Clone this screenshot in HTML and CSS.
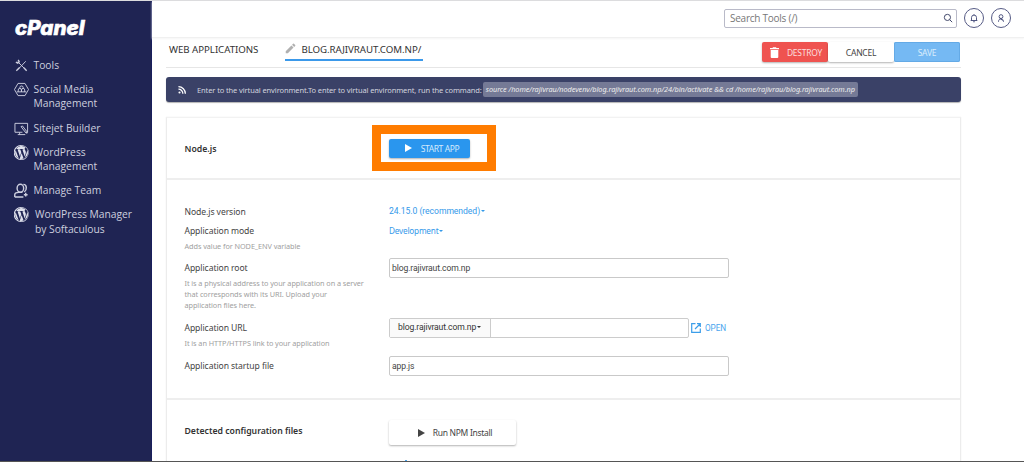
FILE: index.html
```html
<!DOCTYPE html>
<html lang="en">
<head>
<meta charset="utf-8">
<title>cPanel - Web Applications</title>
<link rel="stylesheet" href="styles.css">
</head>
<body>
<svg class="defs" width="0" height="0" aria-hidden="true">
  <symbol id="wordpress" viewBox="0 0 122.5 122.5"><path d="M8.7 61.3c0 20.8 12.1 38.7 29.6 47.3l-25-68.7c-3 6.5-4.6 13.7-4.6 21.4zm88-2.7c0-6.5-2.3-11-4.3-14.5-2.7-4.3-5.2-8-5.2-12.3 0-4.8 3.7-9.3 8.9-9.3h.7a52.4 52.4 0 0 0-79.4 9.9h3.4c5.5 0 13.9-.7 13.9-.7 2.9-.2 3.2 4 .4 4.3 0 0-2.9.3-6 .5l19.1 57 11.5-34.5-8.2-22.5c-2.8-.2-5.5-.5-5.5-.5-2.8-.2-2.5-4.5.3-4.3 0 0 8.7.7 13.9.7 5.5 0 13.9-.7 13.9-.7 2.9-.2 3.2 4 .4 4.3 0 0-2.9.3-6 .5l19 56.5 5.2-17.5c2.3-7.3 4-12.5 4-16.9zm-34.5 7.3-15.8 45.8a52.6 52.6 0 0 0 32.3-.8l-.4-.7zM107.4 36c.2 1.7.4 3.5.4 5.5 0 5.4-1 11.5-4.1 19.1l-16 46.4a52.5 52.5 0 0 0 19.7-71z"/><path d="M61.3 0a61.3 61.3 0 1 0 0 122.5 61.3 61.3 0 0 0 0-122.5zm0 116.7a55.4 55.4 0 1 1 0-110.9 55.4 55.4 0 0 1 0 110.9z"/></symbol>
</svg>
<div class="app">
  <aside class="sidebar">
    <svg class="logo" viewBox="0 0 90 24" role="img" aria-label="cPanel"><text x="1" y="16.2" textLength="69.5" lengthAdjust="spacingAndGlyphs">cPanel</text></svg>
    <nav class="nav">
      <a class="nav-item"><svg class="nav-icon" viewBox="0 0 16 16"><path class="line" d="M4 4l8.5 8.500M12.500 3.500 4 12.500"/><path class="line bold" d="M10.500 10.500l3 3M2.500 13.500l3.500-3.500M2 4.500l2 1 1.500-1.500-1-2"/></svg><span>Tools</span></a>
      <a class="nav-item"><svg class="nav-icon" viewBox="0 0 16 16"><path class="line" d="M4.300 1.500h7.400L15.500 8l-3.800 6.500H4.300L.5 8z"/><path class="line" d="M4.500 10.500V8.500a1.700 1.700 0 0 1 3.400 0v2M8 10.500v-2a1.700 1.700 0 0 1 3.400 0v2M3 10.500h10M6.200 7V6a1.800 1.800 0 0 1 3.600 0v1"/></svg><span>Social Media<br>Management</span></a>
      <a class="nav-item"><svg class="nav-icon" viewBox="0 0 16 16"><path class="line" d="M9 12H1V2.500h13.500V12H12M4 14.500h8M6 12v2.500"/><path class="line" d="M7.500 6l5 6.500 1.500.5-.3-1.700-4.700-6z"/></svg><span>Sitejet Builder</span></a>
      <a class="nav-item"><svg class="nav-icon fill"><use href="#wordpress"/></svg><span>WordPress<br>Management</span></a>
      <a class="nav-item"><svg class="nav-icon" viewBox="0 0 16 16"><ellipse class="line bold" cx="6.800" cy="5.500" rx="3.500" ry="4.200"/><path class="line bold" d="M10 1.500c4 0 4 6 1 8M.8 15v-2.500c0-2 2.500-2.500 4.200-2.500h4M.8 15H10M12.500 10.500v4M10.500 12.500h4"/></svg><span>Manage Team</span></a>
      <a class="nav-item shifted"><svg class="nav-icon fill"><use href="#wordpress"/></svg><span>WordPress Manager<br>by Softaculous</span></a>
    </nav>
  </aside>
  <div class="content">
    <header class="topbar">
      <label class="search"><span>Search Tools (/)</span><svg viewBox="0 0 12 12"><circle cx="5.300" cy="5.300" r="3.700"/><path d="M8 8l3 3"/></svg></label>
      <span class="round"><svg viewBox="0 0 12 12"><path d="M2 9h8M3 9V5.500a3 3 0 0 1 6 0V9M5 10.500h2M6 1.500v1"/></svg></span>
      <span class="round"><svg viewBox="0 0 12 12"><circle cx="6" cy="4.300" r="2.300"/><path d="M3 10.500c0-2.500 1.500-3.500 3-3.500s3 1 3 3.500M4.300 6l3.700 3"/></svg></span>
    </header>
    <main class="main">
      <div class="tabs">
        <a class="tab">WEB APPLICATIONS</a>
        <a class="tab active"><svg viewBox="0 0 12 12"><path d="M.8 9v2.300H3.100L9.300 5 7 2.700zM7.700 2l2.300 2.300 1.100-1.100a.7.7 0 0 0 0-1L9.800.9a.7.7 0 0 0-1 0z"/></svg>BLOG.RAJIVRAUT.COM.NP/</a>
        <div class="actions">
          <button class="btn destroy"><svg viewBox="0 0 9 11"><path d="M0 1h2.500L3 .2h3L6.500 1H9v1.200H0zM.7 3h7.600v7a1 1 0 0 1-1 1H1.700a1 1 0 0 1-1-1z"/></svg>DESTROY</button>
          <button class="btn cancel">CANCEL</button>
          <button class="btn save">SAVE</button>
        </div>
      </div>
      <div class="notice">
        <svg viewBox="0 0 9 9"><circle cx="1.700" cy="7.300" r="1.200"/><path d="M.5 3.600a5 5 0 0 1 5 5M.5.800a7.800 7.800 0 0 1 7.800 7.800"/></svg>
        <span>Enter to the virtual environment.To enter to virtual environment, run the command:</span>
        <code>source /home/rajivrau/nodevenv/blog.rajivraut.com.np/24/bin/activate &amp;&amp; cd /home/rajivrau/blog.rajivraut.com.np</code>
      </div>
      <div class="panel">
        <section class="section start">
          <h2>Node.js</h2>
          <div class="highlight"><button class="btn start-btn"><svg viewBox="0 0 7 8"><path d="M0 0l7 4-7 4z"/></svg>START APP</button></div>
        </section>
        <section class="section form">
          <div class="row version"><div class="label">Node.js version</div><a class="link">24.15.0 (recommended)<i class="caret"></i></a></div>
          <div class="row mode"><div class="label">Application mode<small>Adds value for NODE_ENV variable</small></div><a class="link dev">Development<i class="caret"></i></a></div>
          <div class="row root"><div class="label">Application root<small>It is a physical address to your application on a server<br>that corresponds with its URI. Upload your<br>application files here.</small></div><div class="input">blog.rajivraut.com.np</div></div>
          <div class="row url"><div class="label">Application URL<small>It is an HTTP/HTTPS link to your application</small></div>
            <div class="group"><span class="domain">blog.rajivraut.com.np<i class="caret"></i></span><span class="path"></span></div>
            <a class="open"><svg viewBox="0 0 10 10"><path d="M4.500.7H.7v8.600h8.600V5.500M6 .7h3.300V4M9 1 4 6"/></svg>OPEN</a></div>
          <div class="row startup"><div class="label">Application startup file</div><div class="input">app.js</div></div>
        </section>
        <section class="section detected">
          <h2>Detected configuration files</h2>
          <div class="detected-actions">
            <button class="btn npm"><svg viewBox="0 0 7 8"><path d="M0 0l7 4-7 4z"/></svg>Run NPM Install</button>
            <i class="tip"></i>
          </div>
        </section>
      </div>
    </main>
  </div>
</div>
</body>
</html>
```
FILE: styles.css
```css
* { box-sizing: border-box; }
body { margin: 0; background: #fff; font-family: "Noto Sans", sans-serif; color: #444; }
svg { display: block; flex: none; }
.defs { position: absolute; }
.app { display: flex; height: 462px; overflow: hidden; border-top: 1px solid #dcdcde; border-bottom: 1px solid #555; }
.sidebar { width: 152px; flex: none; background: #1f2453; border-right: 1px solid #191e5c; padding: 18px 0 0 14px; }
.logo { width: 90px; height: 24px; fill: #fff; overflow: visible; }
.logo text { font: italic 800 19.5px "Inter", sans-serif; stroke: #fff; stroke-width: .6px; }
.nav { margin-top: 15px; display: flex; flex-direction: column; gap: 10px; font: 10.300px/14.200px "Open Sans", sans-serif; color: #cdcfdf; }
.nav-item { display: flex; gap: 4.500px; white-space: nowrap; letter-spacing: 0; }
.nav-item.shifted { gap: 6px; letter-spacing: -.03px; }
.nav-icon { width: 15px; height: 15px; margin-bottom: -2px; fill: none; stroke: #cdcfdf; }
.nav-icon.fill { fill: #dfe1ec; stroke: none; }
.nav-icon .line { stroke-width: 1; }
.nav-icon .bold { stroke-width: 1.500; }

.content { flex: 1; min-width: 0; }
.topbar { height: 37px; border-bottom: 1px solid #f0f0f0; box-shadow: 0 1px 2px #f5f5f5; display: flex; align-items: center; justify-content: flex-end; gap: 7px; padding: 0 13px 2px 0; }
.search { width: 233px; height: 19px; border: 1px solid #b9bac8; border-radius: 2px; display: flex; align-items: center; justify-content: space-between; padding: 0 3px 0 5px; font: 10px "Open Sans", sans-serif; letter-spacing: -.25px; color: #777; }
.search svg { width: 10px; height: 10px; fill: none; stroke: #444a6c; stroke-width: 1.200; }
.round { width: 20px; height: 20px; border: 1px solid #565b85; border-radius: 50%; display: grid; place-items: center; }
.round svg { width: 10px; height: 10px; fill: none; stroke: #444a78; stroke-width: 1.100; }

.main { width: 795px; margin-left: 14px; }
.tabs { height: 30px; border-bottom: 1px solid #e6e6e6; display: flex; align-items: flex-start; font-size: 9.700px; color: #333; }
.tab { height: 23px; line-height: 24px; margin-left: 3px; letter-spacing: -.04px; white-space: nowrap; }
.tab.active { margin-left: 27px; width: 138px; border-bottom: 2px solid #3b99ea; display: flex; gap: 5px; }
.tab svg { width: 11px; height: 11px; margin-top: 5px; fill: #b0b0b0; }
.actions { margin: 4px 1px 0 auto; display: flex; }
.btn { border: 0; border-radius: 2px; padding: 0; display: flex; align-items: center; justify-content: center; font: 8.500px "Noto Sans", sans-serif; box-shadow: 0 1px 2px rgba(0,0,0,.3); white-space: nowrap; }
.actions .btn { width: 66px; height: 20px; letter-spacing: -.25px; }
.btn.destroy { background: #ef5350; color: #fbdede; gap: 8px; padding-left: 2px; }
.destroy svg { width: 9px; height: 11px; fill: #fff; }
.btn.cancel { background: #fff; color: #444; }
.btn.save { background: #75b9f3; color: #d9edfc; box-shadow: inset 0 0 0 1px #64aae6; }

.notice { height: 25px; margin-top: 9px; background: #3a4167; border-radius: 3px; box-shadow: 0 1px 1px rgba(0,0,0,.3); display: flex; align-items: center; padding-left: 12px; font-size: 7.500px; letter-spacing: -.11px; color: #d2d4df; white-space: nowrap; }
.notice svg { width: 8px; height: 8px; fill: #fff; margin-right: 11px; }
.notice path { fill: none; stroke: #fff; stroke-width: 1.400; }
.notice code { margin-left: 1px; height: 15px; padding: 0 3px; border-radius: 2px; background: #757a96; color: #eee; font: italic 7.300px/15px "Noto Sans", sans-serif; letter-spacing: -.04px; }

.panel { margin-top: 15px; height: 360px; border: 1px solid #ececec; border-top-color: #f2f2f2; box-shadow: 0 0 1px #e6e6e6; }
.section { border-bottom: 2px solid #eee; padding-left: 17.500px; }
.section h2 { margin: 0; width: 204.500px; font: 600 8.700px "Noto Sans", sans-serif; color: #333; }
.start { height: 62px; display: flex; align-items: center; }
.start h2 { width: 187.500px; padding-top: 1px; }
.highlight { width: 124px; height: 46px; border: 9px solid #ff7c00; padding: 4.500px 8px; }
.start-btn { width: 81px; height: 19px; background: #2a96ee; color: #d4eafc; gap: 9px; letter-spacing: -.4px; padding-left: 5px; }
.start-btn svg, .npm svg { width: 7px; height: 8px; fill: currentColor; }
.start-btn svg { fill: #fff; }
.form { height: 220px; padding-top: 23px; font-size: 8.600px; letter-spacing: -.08px; }
.row { display: flex; }
.label { width: 204.500px; line-height: 18px; white-space: nowrap; }
.label small { display: block; font-size: 7.300px; line-height: 11px; letter-spacing: -.07px; color: #a0a0a0; }
.version { height: 19px; }
.mode { height: 36px; }
.mode small { line-height: 13px; }
.link { height: 18px; line-height: 17px; color: #3499ea; font-family: Roboto, sans-serif; font-size: 8.600px; letter-spacing: -.05px; }
.link.dev { font-family: "Noto Sans", sans-serif; font-size: 8.200px; letter-spacing: -.2px; }
.caret { display: inline-block; margin-left: 1px; border: 2.500px solid transparent; border-top-color: currentColor; border-bottom: 0; vertical-align: 2px; }
.root { height: 60px; }
.root .label, .url .label { line-height: 21px; }
.root small, .url small { margin-top: -1px; }
.input { width: 340px; height: 20px; border: 1px solid #c9c9c9; border-radius: 2px; padding-left: 2px; line-height: 18px; font-family: Roboto, sans-serif; font-size: 8.600px; letter-spacing: -.12px; }
.url { height: 38px; }
.group { display: flex; width: 300px; height: 20px; border: 1px solid #ccc; border-radius: 2px; }
.domain { width: 101px; background: #fafafa; border-right: 1px solid #ccc; padding-left: 8px; line-height: 17px; color: #333; font-family: Roboto, sans-serif; letter-spacing: -.12px; }
.open { margin-left: 2px; display: flex; align-items: center; height: 20px; gap: 4px; color: #4aa5ee; font: 8.200px Roboto, sans-serif; }
.open svg { width: 10px; height: 10px; fill: none; stroke: #3c9ee9; stroke-width: 1.200; }
.startup .label { line-height: 20px; }
.detected { height: 62px; padding-top: 20px; display: flex; border: 0; }
.detected h2 { line-height: 23px; }
.npm { width: 127px; height: 25px; background: #fff; color: #444; gap: 8px; letter-spacing: -.3px; padding-left: 5px; }
.tip { display: block; width: 2px; height: 2px; margin: 15px 0 0 16px; background: #4aa5ee; }
```
